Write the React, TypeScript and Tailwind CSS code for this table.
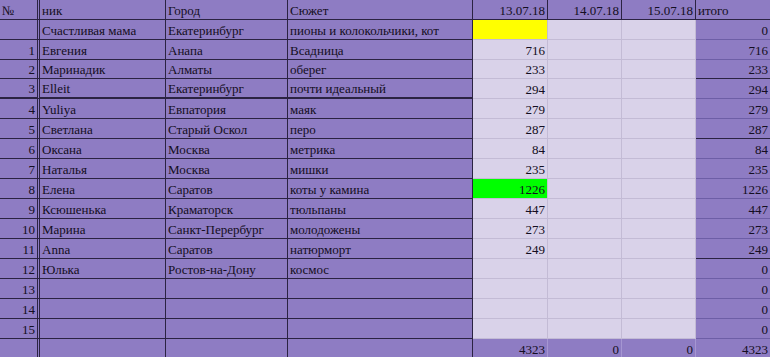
import React from 'react';

type Row = {
  n: string;
  nick: string;
  city: string;
  plot: string;
  d1: string;
  total: string;
  mark?: 'yellow' | 'green';
};

const rows: Row[] = [
  { n: '', nick: 'Счастливая мама', city: 'Екатеринбург', plot: 'пионы и колокольчики, кот', d1: '', total: '0', mark: 'yellow' },
  { n: '1', nick: 'Евгения', city: 'Анапа', plot: 'Всадница', d1: '716', total: '716' },
  { n: '2', nick: 'Маринадик', city: 'Алматы', plot: 'оберег', d1: '233', total: '233' },
  { n: '3', nick: 'Elleit', city: 'Екатеринбург', plot: 'почти идеальный', d1: '294', total: '294' },
  { n: '4', nick: 'Yuliya', city: 'Евпатория', plot: 'маяк', d1: '279', total: '279' },
  { n: '5', nick: 'Светлана', city: 'Старый Оскол', plot: 'перо', d1: '287', total: '287' },
  { n: '6', nick: 'Оксана', city: 'Москва', plot: 'метрика', d1: '84', total: '84' },
  { n: '7', nick: 'Наталья', city: 'Москва', plot: 'мишки', d1: '235', total: '235' },
  { n: '8', nick: 'Елена', city: 'Саратов', plot: 'коты у камина', d1: '1226', total: '1226', mark: 'green' },
  { n: '9', nick: 'Ксюшенька', city: 'Краматорск', plot: 'тюльпаны', d1: '447', total: '447' },
  { n: '10', nick: 'Марина', city: 'Санкт-Перербург', plot: 'молодожены', d1: '273', total: '273' },
  { n: '11', nick: 'Anna', city: 'Саратов', plot: 'натюрморт', d1: '249', total: '249' },
  { n: '12', nick: 'Юлька', city: 'Ростов-на-Дону', plot: 'космос', d1: '', total: '0' },
  { n: '13', nick: '', city: '', plot: '', d1: '', total: '0' },
  { n: '14', nick: '', city: '', plot: '', d1: '', total: '0' },
  { n: '15', nick: '', city: '', plot: '', d1: '', total: '0' }
];

const cell = 'flex items-end overflow-hidden whitespace-nowrap border-b px-[2px] pb-[1px]';
// purple cell with dark grid
const dark = `${cell} bg-[#8e7cc3] border-r border-[#2b2342]`;
// light data cell (date columns)
const lightGrid = `${cell} justify-end border-r border-[#c3bbd5]`;

const numCol = 'w-[40px] justify-end border-r-[3px] border-double';

function markBg(mark?: 'yellow' | 'green') {
  if (mark === 'yellow') return 'bg-[#ffff00]';
  if (mark === 'green') return 'bg-[#00ff00]';
  return 'bg-[#d9d2e9]';
}

// итого column: mostly soft lines, a few dark ones
function sumCell(i: number) {
  const line = i === 2 || i === 5 || i === 11 ? 'border-[#2b2342]' : 'border-[#6d5ea6]';
  return `${cell} flex-1 justify-end bg-[#8e7cc3] ${line}`;
}

export default function App() {
  return (
    <div className="w-[770px] h-[357px] overflow-hidden bg-[#8e7cc3] font-['Liberation_Serif','Times_New_Roman',serif] text-[13px] leading-[15px] text-[#140e22]">
      {/* header */}
      <div className="flex h-[20px]">
        <div className={`${dark} w-[40px] border-r-[3px] border-double`}>№</div>
        <div className={`${dark} w-[126px]`}>ник</div>
        <div className={`${dark} w-[122px]`}>Город</div>
        <div className={`${dark} w-[185px]`}>Сюжет</div>
        <div className={`${dark} w-[75px] justify-end`}>13.07.18</div>
        <div className={`${dark} w-[74px] justify-end`}>14.07.18</div>
        <div className={`${dark} w-[74px] justify-end`}>15.07.18</div>
        <div className={`${dark} flex-1 border-r-0`}>итого</div>
      </div>

      {rows.map((r, i) => (
        <div key={i} className={i === 2 ? 'flex h-[19px]' : 'flex h-[20px]'}>
          <div className={`${dark} ${numCol} ${i === 3 ? 'border-b-2' : ''}`}>{r.n}</div>
          <div className={`${dark} w-[126px] ${i === 3 ? 'border-b-2' : ''}`}>{r.nick}</div>
          <div className={`${dark} w-[122px] ${i === 3 ? 'border-b-2' : ''}`}>{r.city}</div>
          <div className={`${dark} w-[185px] ${i === 3 ? 'border-b-2' : ''}`}>{r.plot}</div>
          <div className={`${lightGrid} ${markBg(r.mark)} w-[75px]`}>{r.d1}</div>
          <div className={`${lightGrid} bg-[#d9d2e9] w-[74px]`}></div>
          <div className={`${lightGrid} bg-[#d9d2e9] w-[74px]`}></div>
          <div className={sumCell(i)}>{r.total}</div>
        </div>
      ))}

      {/* totals */}
      <div className="flex h-[20px]">
        <div className={`${dark} ${numCol}`}></div>
        <div className={`${dark} w-[126px]`}></div>
        <div className={`${dark} w-[122px]`}></div>
        <div className={`${dark} w-[185px]`}></div>
        <div className={`${cell} justify-end bg-[#8e7cc3] border-r border-[#a596d2] w-[75px]`}>4323</div>
        <div className={`${cell} justify-end bg-[#8e7cc3] border-r border-[#a596d2] w-[74px]`}>0</div>
        <div className={`${cell} justify-end bg-[#8e7cc3] border-r border-[#a596d2] w-[74px]`}>0</div>
        <div className={`${cell} flex-1 justify-end bg-[#8e7cc3] border-[#6d5ea6]`}>4323</div>
      </div>
    </div>
  );
}
